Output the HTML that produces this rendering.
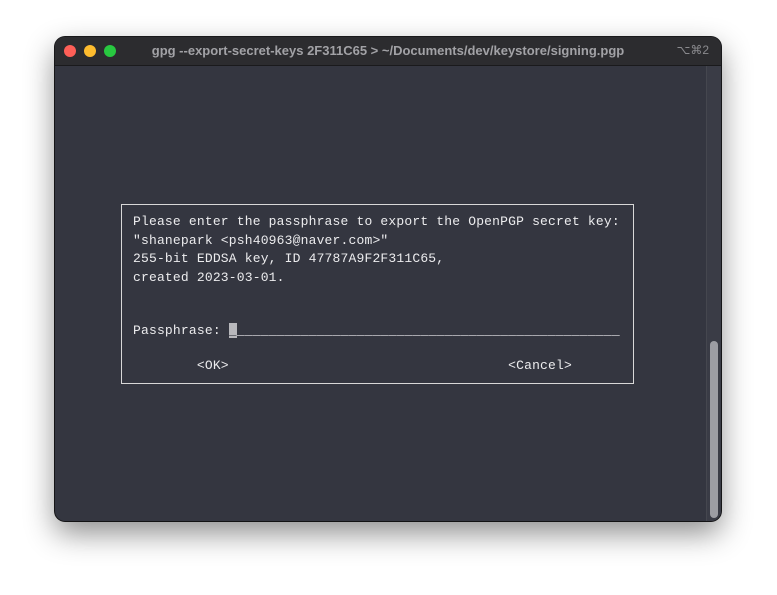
<!DOCTYPE html>
<html><head><style>
html,body{margin:0;width:777px;height:595px;background:#fff;overflow:hidden}
.win{position:absolute;left:55px;top:37px;width:666px;height:484px;border-radius:10px;background:#343640;box-shadow:0 12px 30px rgba(0,0,0,.45),0 0 0 1px #1c1c1e;overflow:hidden}
.tb{position:absolute;left:0;top:0;width:100%;height:28px;background:#2c2c2f;border-bottom:1px solid #1a1a1c}
.dot{position:absolute;top:8px;width:12px;height:12px;border-radius:50%}
.title{position:absolute;left:0;right:0;top:6px;text-align:center;font:bold 13px "Liberation Sans",sans-serif;color:#a2a2a6}
.kb{position:absolute;right:12px;top:6px;font:12px "Liberation Sans","DejaVu Sans",sans-serif;color:#8a8a8e}
.track{position:absolute;left:651px;top:29px;width:14px;height:455px;background:#3a3c46;border-left:1px solid #45474f}
.thumb{position:absolute;left:655px;top:304px;width:8px;height:177px;border-radius:4px;background:#9c9da3}
.box{position:absolute;left:121px;top:204px;width:511px;height:178px;border:1px solid #d8d8d8}
pre{margin:0;position:absolute;left:133px;font:13px/18.7px "Liberation Mono",monospace;letter-spacing:0.18px;color:#ececee}
.cur{background:#b8b8bc;color:#343640}
</style></head><body>
<div class="win">
<div class="tb">
<div class="dot" style="left:9px;background:#fe5f57"></div>
<div class="dot" style="left:29px;background:#febc2e"></div>
<div class="dot" style="left:49px;background:#28c840"></div>
<div class="title">gpg --export-secret-keys 2F311C65 &gt; ~/Documents/dev/keystore/signing.pgp</div>
<div class="kb">⌥⌘2</div>
</div>
<div class="track"></div>
<div class="thumb"></div>
</div>
<div class="box"></div>
<pre style="top:213px">Please enter the passphrase to export the OpenPGP secret key:
"shanepark &lt;psh40963@naver.com&gt;"
255-bit EDDSA key, ID 47787A9F2F311C65,
created 2023-03-01.</pre>
<pre style="top:322px">Passphrase: <span class="cur">_</span>________________________________________________</pre>
<pre style="top:357px">        &lt;OK&gt;                                   &lt;Cancel&gt;</pre>
</body></html>
